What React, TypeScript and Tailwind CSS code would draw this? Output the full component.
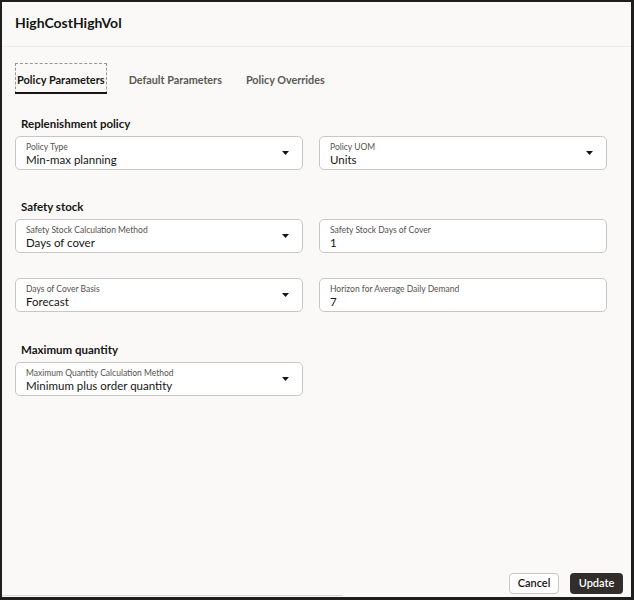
import { ReactNode } from 'react';

type FieldProps = {
  label: string;
  value: string;
  select?: boolean;
};

function Field({ label, value, select }: FieldProps) {
  return (
    <div className="relative h-[34px] rounded-[5px] border border-[#c9c7c4] bg-white pl-[10px] pt-[5px]">
      <div className="text-[8.5px] leading-[11px] text-[#55524d]">{label}</div>
      <div className="text-[11.5px] leading-[13px] text-[#161513]">{value}</div>
      {select && (
        <svg
          className="absolute right-[13px] top-[14px]"
          width="7"
          height="4"
          viewBox="0 0 7 4"
        >
          <path d="M0 0 L7 0 L3.5 4 Z" fill="#161513" />
        </svg>
      )}
    </div>
  );
}

function Section({ title, mt, children }: { title: string; mt: string; children: ReactNode }) {
  return (
    <div className={mt}>
      <div className="h-[16px] pl-[6px] text-[11.5px] font-bold leading-[16px] text-[#161513]">
        {title}
      </div>
      <div className="mt-[4px] space-y-[25px]">{children}</div>
    </div>
  );
}

export default function App() {
  return (
    <div
      className="flex h-[600px] w-[634px] flex-col border-b-[3px] border-l-2 border-r-[3px] border-t-2 border-[#1e1e1e] bg-[#faf9f8] text-[#161513]"
      style={{ fontFamily: 'Lato, "Noto Sans", sans-serif' }}
    >
      <div className="h-[45px] border-b border-[#efedeb] px-[13px] pt-[11px]">
        <h1 className="text-[14px] font-bold leading-[20px]">HighCostHighVol</h1>
      </div>

      <div className="flex-1 px-[13px]">
        <div className="mt-[16px] flex items-start gap-[20px]">
          <div className="relative flex h-[31px] items-center border border-dashed border-[#9a9894] px-[1px] pt-[3px] text-[11px] font-bold leading-[16px]">
            Policy Parameters
            <span className="absolute bottom-[-1px] left-[-1px] right-[-1px] h-[2px] bg-[#161513]" />
          </div>
          <div className="flex h-[31px] items-center px-[2px] pt-[3px] text-[10.8px] font-bold leading-[16px] text-[#5b5853]">
            Default Parameters
          </div>
          <div className="flex h-[31px] items-center px-[2px] pt-[3px] text-[10.8px] font-bold leading-[16px] text-[#5b5853]">
            Policy Overrides
          </div>
        </div>

        <Section title="Replenishment policy" mt="mt-[22px]">
          <div className="grid w-[592px] grid-cols-2 gap-x-[16px]">
            <Field label="Policy Type" value="Min-max planning" select />
            <Field label="Policy UOM" value="Units" select />
          </div>
        </Section>

        <Section title="Safety stock" mt="mt-[29px]">
          <div className="grid w-[592px] grid-cols-2 gap-x-[16px]">
            <Field label="Safety Stock Calculation Method" value="Days of cover" select />
            <Field label="Safety Stock Days of Cover" value="1" />
          </div>
          <div className="grid w-[592px] grid-cols-2 gap-x-[16px]">
            <Field label="Days of Cover Basis" value="Forecast" select />
            <Field label="Horizon for Average Daily Demand" value="7" />
          </div>
        </Section>

        <Section title="Maximum quantity" mt="mt-[30px]">
          <div className="grid w-[592px] grid-cols-2 gap-x-[16px]">
            <Field label="Maximum Quantity Calculation Method" value="Minimum plus order quantity" select />
          </div>
        </Section>
      </div>

      <div className="flex justify-end gap-[11px] pr-[8px]">
        <button className="h-[21px] w-[50px] rounded-[4px] border border-[#c9c7c4] bg-white text-[11px] font-semibold text-[#161513]">
          Cancel
        </button>
        <button className="h-[21px] w-[53px] rounded-[4px] bg-[#312d2a] text-[11px] font-semibold text-white">
          Update
        </button>
      </div>
      <div className="mt-[1px] h-[2px]">
        <div className="h-[1px] w-[341px] bg-[#d9d7d4]" />
      </div>
    </div>
  );
}
